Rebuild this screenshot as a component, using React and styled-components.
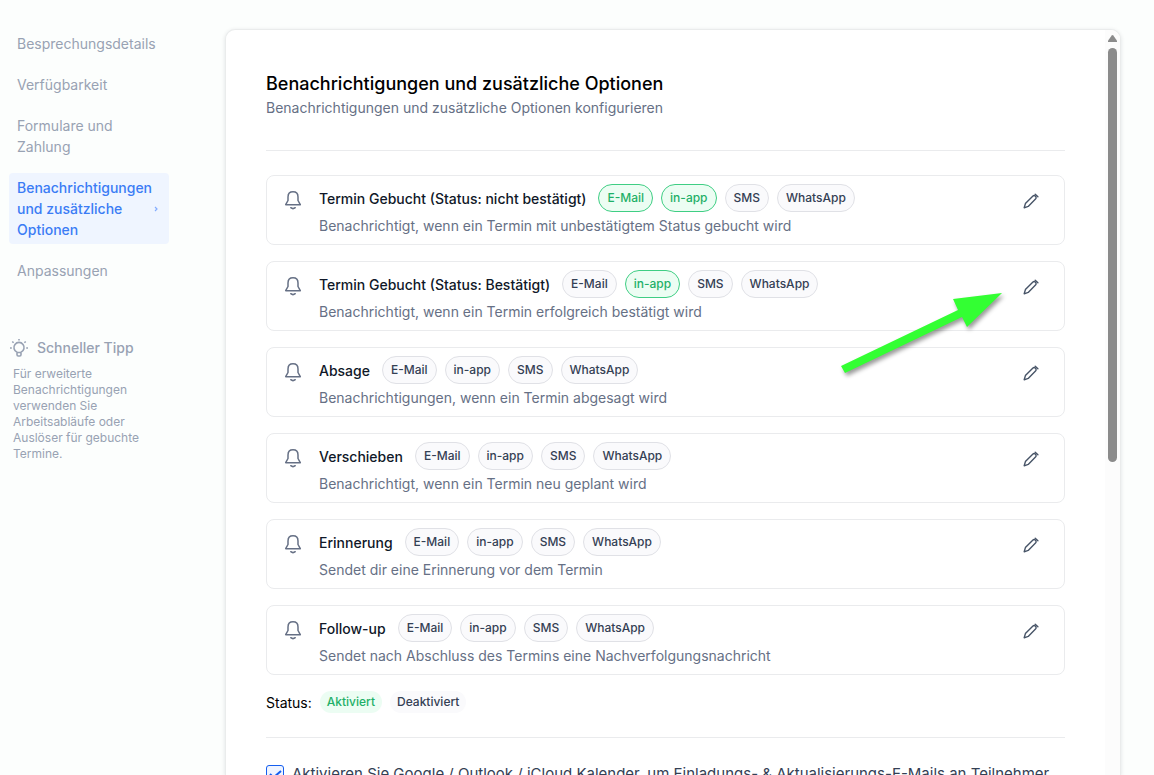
import React, { useState } from 'react';
import styled, { createGlobalStyle, css } from 'styled-components';

const GlobalStyle = createGlobalStyle`
  * {
    box-sizing: border-box;
  }

  body {
    margin: 0;
    background: #fcfefd;
    color: #101828;
    font-family: Inter, "Liberation Sans", sans-serif;
    font-size: 14px;
    line-height: 20px;
  }

  button {
    font-family: inherit;
    cursor: pointer;
  }
`

const Page = styled.div`
  display: flex;
  gap: 56px;
  height: 100vh;
  padding: 29px 33px 0 9px;
  overflow: hidden;
`

const Sidebar = styled.aside`
  flex: 0 0 160px;
`

const Nav = styled.nav`
  display: flex;
  flex-direction: column;
  gap: 12px;
`

const NavLink = styled.a`
  display: flex;
  align-items: center;
  justify-content: space-between;
  padding: 4px 8px;
  border-radius: 4px;
  line-height: 21px;
  text-decoration: none;
  color: ${props => props.$active ? '#3b7cf5' : '#98a2b3'};
  background: ${props => props.$active ? '#eff5ff' : 'transparent'};
  font-weight: ${props => props.$active ? 500 : 400};

  svg {
    flex: none;
    margin-right: 2px;
  }
`

const Tip = styled.section`
  margin-top: 53px;
`

const TipTitle = styled.h3`
  display: flex;
  align-items: center;
  gap: 8px;
  margin: 0 0 8px;
  font-size: 14px;
  font-weight: 500;
  color: #98a2b3;
`

const TipText = styled.p`
  margin: 0;
  padding: 0 20px 0 4px;
  font-size: 12px;
  line-height: 16px;
  color: #98a2b3;
`

const Panel = styled.main`
  display: flex;
  flex: 1;
  min-width: 0;
  overflow: hidden;
  border: 1px solid #eaecec;
  border-bottom: 0;
  border-radius: 10px 10px 0 0;
  background: #fff;
  box-shadow: 0 1px 4px rgba(16, 24, 40, 0.12);
`

const Content = styled.div`
  flex: 1;
  min-width: 0;
  padding: 43px 40px 0;
`

const ScrollTrack = styled.div`
  display: flex;
  flex: 0 0 15px;
  flex-direction: column;
  align-items: center;
  gap: 6px;
  padding-top: 5px;
  background: #fcfcfc;
`

const ScrollThumb = styled.div`
  width: 9px;
  height: 56%;
  border-radius: 5px;
  background: #8b8b8b;
`

const Title = styled.h1`
  margin: 0;
  font-size: 18px;
  line-height: 22px;
  font-weight: 500;
  color: #000;
`

const Subtitle = styled.p`
  margin: 3px 0 0;
  color: #667085;
`

const Divider = styled.hr`
  height: 1px;
  margin: ${props => props.$margin};
  border: 0;
  background: #eaebed;
`

const List = styled.ul`
  display: flex;
  flex-direction: column;
  gap: 16px;
  margin: 0;
  padding: 0;
  list-style: none;
`

const Item = styled.li`
  display: flex;
  align-items: flex-start;
  padding: 8px 25px 8px 16px;
  border: 1px solid #eaebed;
  border-radius: 8px;

  > svg {
    flex: none;
    margin: 6px 16px 0 0;
  }
`

const ItemBody = styled.div`
  flex: 1;
  min-width: 0;
`

const ItemHead = styled.div`
  display: flex;
  align-items: center;
  gap: 12px;
`

const ItemTitle = styled.h2`
  margin: 2px 0 0;
  font-size: 14px;
  line-height: 20px;
  font-weight: 500;
`

const Description = styled.p`
  margin: 4px 0 0;
  color: #667085;
`

const Pills = styled.div`
  display: flex;
  gap: 8px;
`

const onPill = css`
  border-color: #3fce84;
  background: #ecfdf3;
  color: #1eb068;
`

const Pill = styled.button`
  height: 28px;
  padding: 0 8px;
  border: 1px solid #e0e1e6;
  border-radius: 14px;
  background: #fafafc;
  color: #344054;
  font-size: 12px;
  line-height: 16px;
  font-weight: 500;
  ${props => props.$on && onPill}
`

const StatusPill = styled(Pill)`
  height: 22px;
  padding: 0 7px;
  border: 0;
  border-radius: 11px;
`

const EditButton = styled.button`
  display: flex;
  margin-top: 9px;
  padding: 0;
  border: 0;
  background: none;
`

const StatusRow = styled.div`
  display: flex;
  align-items: center;
  gap: 8px;
  margin-top: 16px;
  color: #000;
`

const StatusName = styled.span`
  padding-top: 2px;
`

const CheckLabel = styled.label`
  display: flex;
  align-items: flex-start;
  gap: 8px;
  font-size: 15px;
  line-height: 18px;
  color: #344054;
  white-space: nowrap;
`

const Checkbox = styled.input`
  flex: none;
  width: 18px;
  height: 18px;
  margin: 0;
  appearance: none;
  border: 1px solid #155eef;
  border-radius: 3px;
  background: #eff4ff;

  &:checked {
    background: #eff4ff url("data:image/svg+xml,%3Csvg xmlns='http://www.w3.org/2000/svg' viewBox='0 0 16 16' fill='none' stroke='%23155eef' stroke-width='2'%3E%3Cpath d='M3 8l3.500 3.500L14 5'/%3E%3C/svg%3E") center / 16px no-repeat;
  }
`

const Arrow = styled.svg`
  position: absolute;
  top: 288px;
  left: 836px;
  pointer-events: none;
  filter: drop-shadow(2px 3px 2px rgba(0, 0, 0, 0.4));
`

const BellIcon = () => (
  <svg width="20" height="20" viewBox="0 0 20 20" fill="none" stroke="#667085" strokeWidth="1.5" strokeLinecap="round" strokeLinejoin="round">
    <path d="M10 1.800c-3.200 0-5 2.300-5 5.200v3.500L2.700 14.700h14.600L15 10.500V7c0-2.900-1.800-5.200-5-5.200z" />
    <path d="M7.800 17.700c1.200 1 3.200 1 4.400 0" />
  </svg>
)

const PencilIcon = () => (
  <svg width="16" height="16" viewBox="0 0 16 16" fill="none" stroke="#475467" strokeWidth="1.400" strokeLinejoin="round" strokeLinecap="round">
    <path d="M9.700 3.300a1.900 1.900 0 0 1 2.800 2.800l-7.300 7.300-4 1.400 1.200-4.200z" />
    <path d="M12.200 1.200l2.700 2.600" />
  </svg>
)

const BulbIcon = () => (
  <svg width="20" height="20" viewBox="0 0 20 20" fill="none" stroke="#98a2b3" strokeWidth="1.600">
    <path d="M8 15.200v-1a5.100 5.100 0 1 1 4 0v1M8 14.500v2.300c0 .7.500 1.200 1.200 1.200h1.600c.7 0 1.200-.5 1.200-1.200v-2.300z" />
    <path d="M10 1v1.600M1 10h1.800M17.200 10H19M3.300 3.500l1.300 1.300M16.700 3.500l-1.300 1.300" />
  </svg>
)

const navItems = [
  'Besprechungsdetails',
  'Verfügbarkeit',
  'Formulare und Zahlung',
  'Benachrichtigungen und zusätzliche Optionen',
  'Anpassungen'
]

const channels = ['E-Mail', 'in-app', 'SMS', 'WhatsApp']

const notifications = [
  { title: 'Termin Gebucht (Status: nicht bestätigt)', text: 'Benachrichtigt, wenn ein Termin mit unbestätigtem Status gebucht wird', on: ['E-Mail', 'in-app'] },
  { title: 'Termin Gebucht (Status: Bestätigt)', text: 'Benachrichtigt, wenn ein Termin erfolgreich bestätigt wird', on: ['in-app'] },
  { title: 'Absage', text: 'Benachrichtigungen, wenn ein Termin abgesagt wird', on: [] },
  { title: 'Verschieben', text: 'Benachrichtigt, wenn ein Termin neu geplant wird', on: [] },
  { title: 'Erinnerung', text: 'Sendet dir eine Erinnerung vor dem Termin', on: [] },
  { title: 'Follow-up', text: 'Sendet nach Abschluss des Termins eine Nachverfolgungsnachricht', on: [] }
]

const Notification = ({ item }) => (
  <Item>
    <BellIcon />
    <ItemBody>
      <ItemHead>
        <ItemTitle>{item.title}</ItemTitle>
        <Pills>
          {channels.map(name => (
            <Pill key={name} type="button" $on={item.on.includes(name)}>{name}</Pill>
          ))}
        </Pills>
      </ItemHead>
      <Description>{item.text}</Description>
    </ItemBody>
    <EditButton type="button" aria-label="Bearbeiten">
      <PencilIcon />
    </EditButton>
  </Item>
)

export default function App() {
  const [active, setActive] = useState(navItems[3])
  const [enabled, setEnabled] = useState(true)
  const [invites, setInvites] = useState(true)

  return (
    <>
      <GlobalStyle />
      <Page>
        <Sidebar>
          <Nav>
            {navItems.map(name => (
              <NavLink key={name} href="#" $active={name === active} onClick={() => setActive(name)}>
                {name}
                {name === active && (
                  <svg width="5" height="6" viewBox="0 0 5 6" fill="none" stroke="#84adff" strokeWidth="1.200">
                    <path d="M1 1l2 2-2 2" />
                  </svg>
                )}
              </NavLink>
            ))}
          </Nav>
          <Tip>
            <TipTitle><BulbIcon />Schneller Tipp</TipTitle>
            <TipText>
              Für erweiterte Benachrichtigungen verwenden Sie Arbeitsabläufe oder Auslöser für gebuchte Termine.
            </TipText>
          </Tip>
        </Sidebar>

        <Panel>
          <Content>
            <Title>Benachrichtigungen und zusätzliche Optionen</Title>
            <Subtitle>Benachrichtigungen und zusätzliche Optionen konfigurieren</Subtitle>
            <Divider $margin="32px 0 24px" />
            <List>
              {notifications.map(item => <Notification key={item.title} item={item} />)}
            </List>
            <StatusRow>
              <StatusName>Status:</StatusName>
              <StatusPill type="button" $on={enabled} onClick={() => setEnabled(true)}>Aktiviert</StatusPill>
              <StatusPill type="button" $on={!enabled} onClick={() => setEnabled(false)}>Deaktiviert</StatusPill>
            </StatusRow>
            <Divider $margin="24px 0 27px" />
            <CheckLabel>
              <Checkbox type="checkbox" checked={invites} onChange={e => setInvites(e.target.checked)} />
              Aktivieren Sie Google / Outlook / iCloud Kalender, um Einladungs- & Aktualisierungs-E-Mails an Teilnehmer
            </CheckLabel>
          </Content>
          <ScrollTrack>
            <svg width="9" height="7" viewBox="0 0 9 7" fill="#8b8b8b">
              <path d="M3.700.6a1 1 0 0 1 1.600 0L9 5.800V7H0V5.800z" />
            </svg>
            <ScrollThumb />
          </ScrollTrack>
        </Panel>
      </Page>

      {/* Pointer to the edit button */}
      <Arrow width="170" height="92" viewBox="0 0 170 92">
        <path d="M166 5L117 11l5 11L5 78l4 7 117-56 5 10z" fill="#33ff33" />
      </Arrow>
    </>
  )
}
